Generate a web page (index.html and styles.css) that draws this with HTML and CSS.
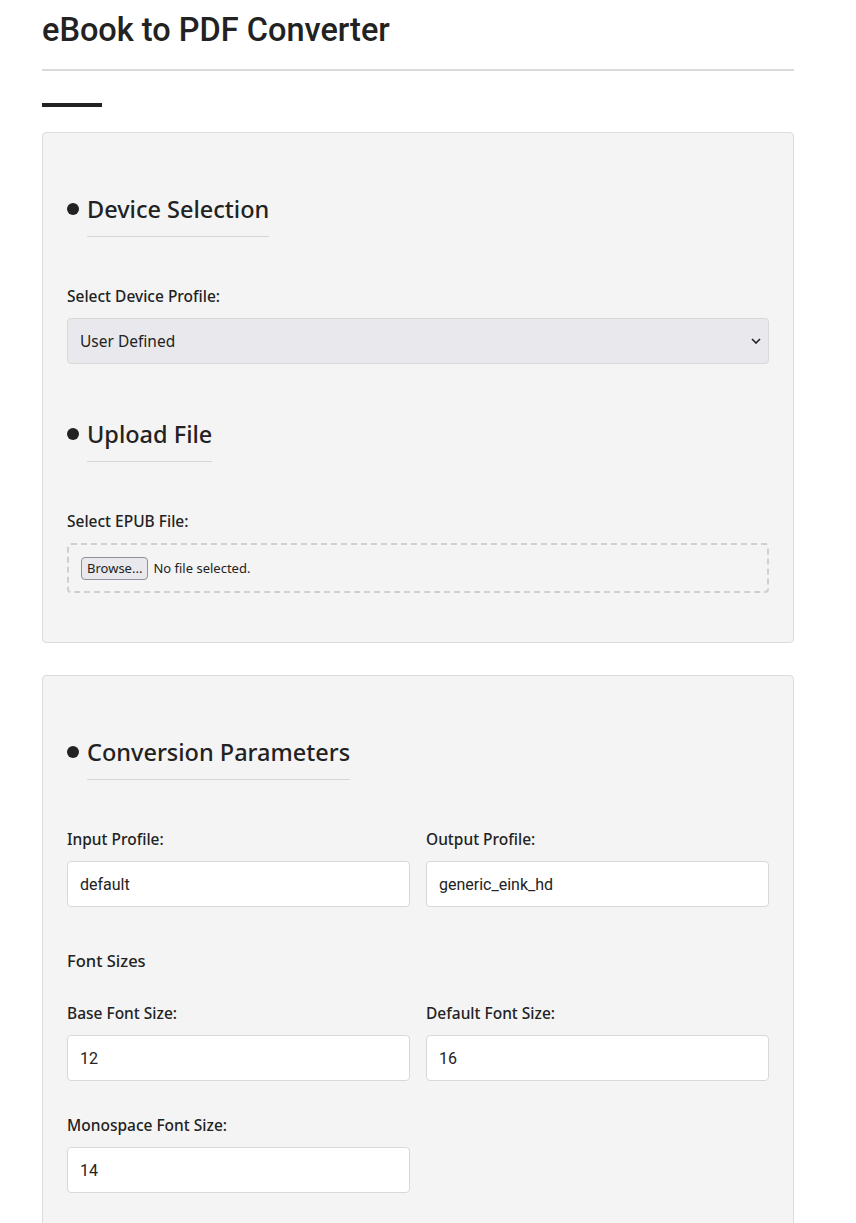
FILE: index.html
```html
<!DOCTYPE html>
<html lang="en">
<head>
<meta charset="utf-8">
<title>eBook to PDF Converter</title>
<link rel="stylesheet" href="styles.css">
</head>
<body>
<main class="container">
  <h1 class="title">eBook to PDF Converter</h1>
  <div class="accent"></div>

  <section class="card">
    <h2 class="section-title">Device Selection</h2>
    <div class="group">
      <label class="label" for="device">Select Device Profile:</label>
      <div class="select-wrap">
        <select id="device" class="select">
          <option>User Defined</option>
        </select>
        <svg class="chevron" width="10" height="6" viewBox="0 0 10 6"><path d="M1 1 L5 5 L9 1" fill="none" stroke="#222" stroke-width="1.6"/></svg>
      </div>
    </div>

    <h2 class="section-title">Upload File</h2>
    <div class="group">
      <span class="label">Select EPUB File:</span>
      <label class="file-drop">
        <span class="browse">Browse...</span>
        <span class="file-status">No file selected.</span>
      </label>
    </div>
  </section>

  <section class="card">
    <h2 class="section-title">Conversion Parameters</h2>
    <div class="row">
      <div class="field">
        <label class="label" for="inp">Input Profile:</label>
        <input id="inp" class="input" type="text" value="default">
      </div>
      <div class="field">
        <label class="label" for="outp">Output Profile:</label>
        <input id="outp" class="input" type="text" value="generic_eink_hd">
      </div>
    </div>

    <h3 class="subhead">Font Sizes</h3>
    <div class="row">
      <div class="field">
        <label class="label" for="base">Base Font Size:</label>
        <input id="base" class="input" type="text" value="12">
      </div>
      <div class="field">
        <label class="label" for="def">Default Font Size:</label>
        <input id="def" class="input" type="text" value="16">
      </div>
    </div>
    <div class="row">
      <div class="field">
        <label class="label" for="mono">Monospace Font Size:</label>
        <input id="mono" class="input" type="text" value="14">
      </div>
    </div>
  </section>
</main>
</body>
</html>
```

FILE: styles.css
```css
* { box-sizing: border-box; }

body {
  margin: 0;
  background: #ffffff;
  color: #222222;
  font-family: "Noto Sans", "Open Sans", sans-serif;
}

.container {
  width: 752px;
  margin-left: 42px;
  padding-bottom: 40px;
}

.title {
  font-family: Roboto, sans-serif;
  font-weight: 500;
  font-size: 32.5px;
  line-height: 40px;
  margin: 0;
  padding-top: 10px;
  padding-bottom: 19px;
  border-bottom: 2px solid #d9d9d9;
  color: #222;
}

.accent {
  width: 60px;
  height: 4px;
  background: #222;
  margin-top: 32px;
  margin-bottom: 25px;
}

.card {
  background: #f4f4f4;
  border: 1px solid #dcdcdc;
  border-radius: 4px;
  padding: 30px 24px 25px;
  margin-bottom: 32px;
}

.section-title {
  position: relative;
  display: inline-block;
  margin: 30px 0 48px 20px;
  padding-bottom: 11px;
  font-size: 23.5px;
  line-height: 32px;
  font-weight: 500;
  border-bottom: 1px solid #d6d6d6;
  color: #222;
}

.section-title::before {
  content: "";
  position: absolute;
  left: -20px;
  top: 10px;
  width: 12px;
  height: 12px;
  border-radius: 50%;
  background: #222;
}

.group {
  margin-bottom: 24px;
}

.label {
  display: block;
  font-size: 15.5px;
  font-weight: 500;
  line-height: 23px;
  margin-bottom: 10px;
  color: #222;
}

.select-wrap {
  position: relative;
}

.select {
  display: block;
  width: 100%;
  height: 46px;
  appearance: none;
  -webkit-appearance: none;
  background: #e9e9ed;
  border: 1px solid #d8d8d8;
  border-radius: 4px;
  padding: 0 12px;
  font-family: inherit;
  font-size: 15.5px;
  color: #222;
}

.chevron {
  position: absolute;
  right: 8px;
  top: 20px;
}

.file-drop {
  display: flex;
  align-items: center;
  gap: 5px;
  height: 50px;
  border: 2px dashed #cfcfcf;
  border-radius: 4px;
  padding: 0 12px;
}

.browse {
  display: inline-block;
  background: #e9e9ed;
  border: 1px solid #8f8f9d;
  border-radius: 4px;
  padding: 2px 5px;
  font-size: 13px;
  line-height: 17px;
  color: #222;
}

.file-status {
  font-size: 13px;
  color: #222;
}

.row {
  display: grid;
  grid-template-columns: 1fr 1fr;
  column-gap: 16px;
  margin-bottom: 33px;
}

.input {
  display: block;
  width: 100%;
  height: 46px;
  background: #fff;
  border: 1px solid #d8d8d8;
  border-radius: 4px;
  padding: 0 12px;
  font-family: Roboto, sans-serif;
  font-size: 16px;
  color: #222;
}

.subhead {
  font-size: 16.5px;
  font-weight: 500;
  line-height: 24px;
  margin: 42px 0 29px;
  color: #222;
}
```
